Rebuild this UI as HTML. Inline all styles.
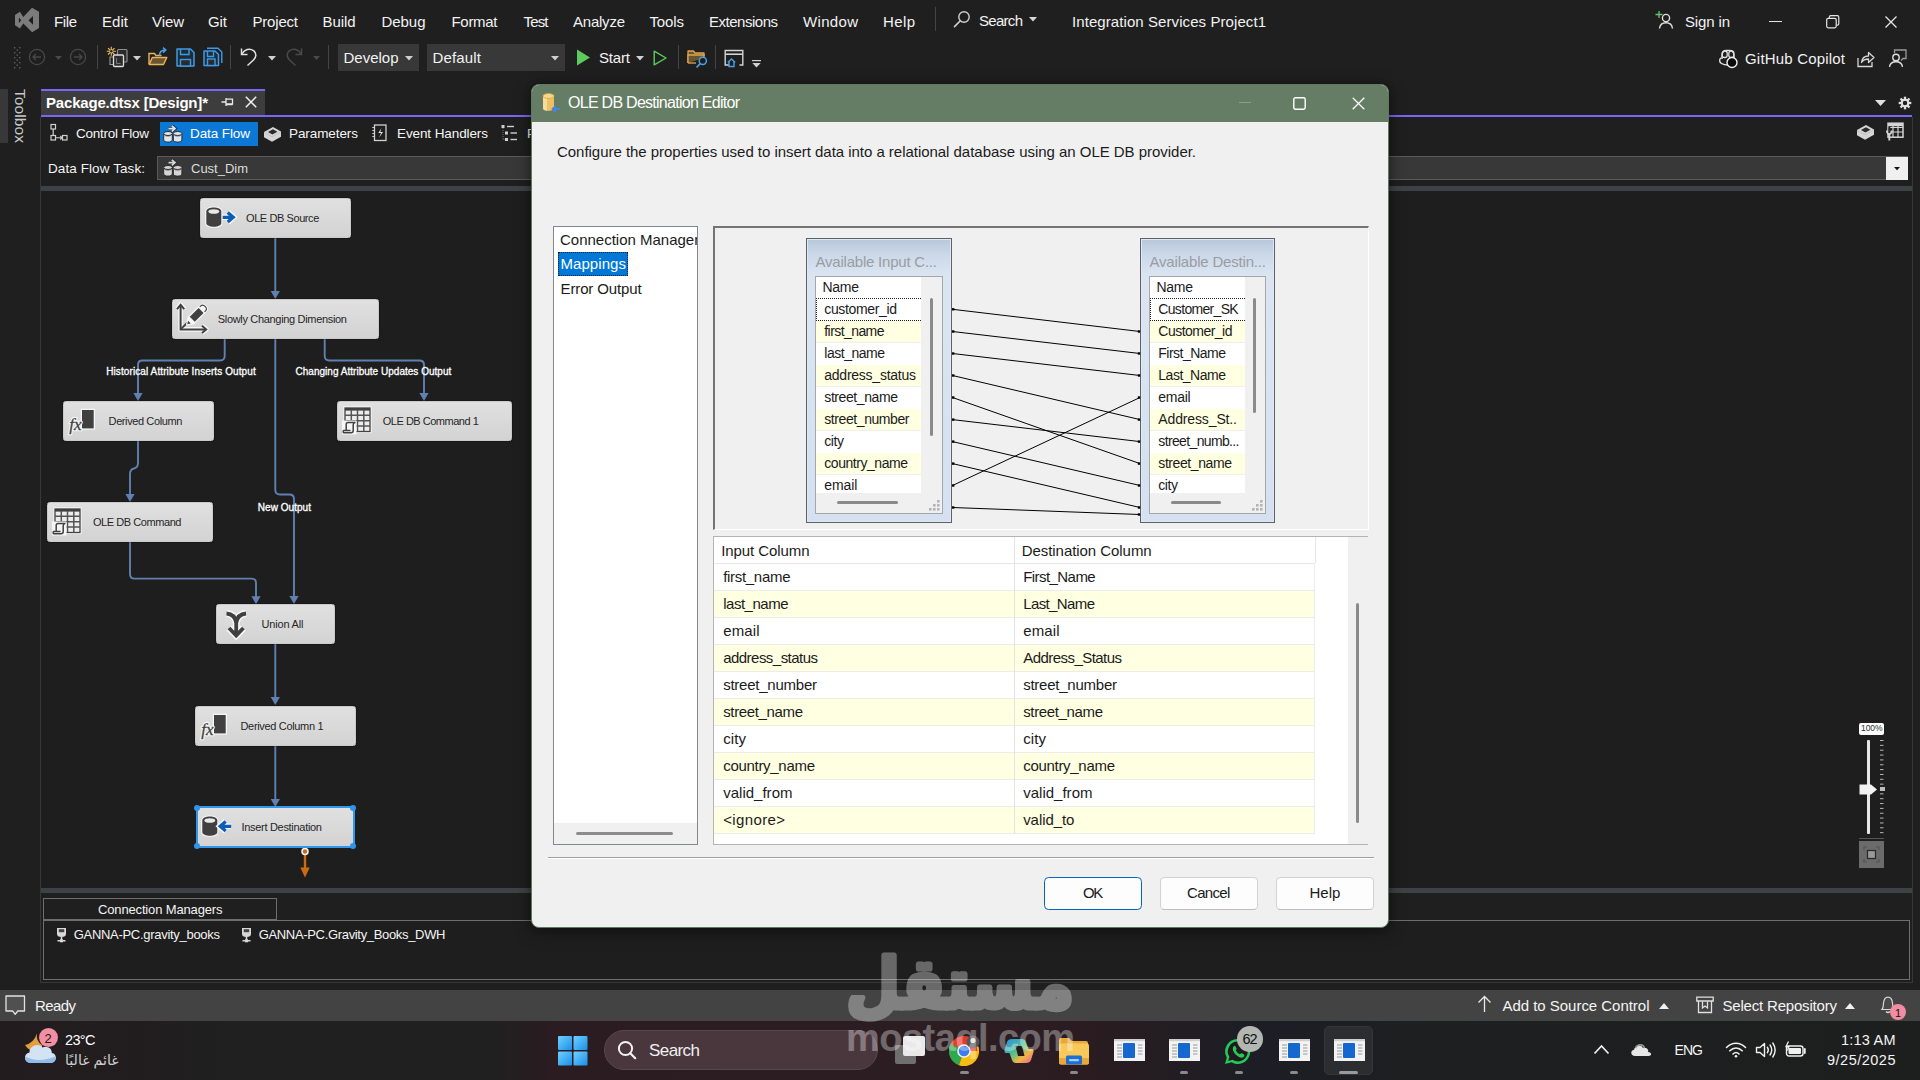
<!DOCTYPE html><html lang="en"><head><meta charset="utf-8"><title>OLE DB Destination Editor - Integration Services Project1</title><style>

html,body{margin:0;padding:0}
body{width:1920px;height:1080px;position:relative;overflow:hidden;background:#1f1f1f;font-family:"Liberation Sans","DejaVu Sans",sans-serif}
div,svg,span.t{position:absolute}
div{box-sizing:border-box}
.t{white-space:pre;line-height:0}
svg{overflow:visible}

</style></head><body>
<svg style="left:15px;top:8px;" width="24" height="24" viewBox="0 0 24 24"><path d="M17 -0.2L24 3.8V20L17.2 24.3L8.3 15.4L4.9 20.6L0 17.3V7L4.9 3.7L8.3 8.9Z M18 8V16.8L13.5 12.2Z M3.9 9.4V15L6.2 12.2Z" fill="#7c7c7c" fill-rule="evenodd"/></svg>
<span class="t" id="t0" style="left:54px;top:21.5px;font-size:15px;color:#f2f2f2;letter-spacing:-0.391px;">File</span>
<span class="t" id="t1" style="left:102px;top:21.5px;font-size:15px;color:#f2f2f2;letter-spacing:0.047px;">Edit</span>
<span class="t" id="t2" style="left:152px;top:21.5px;font-size:15px;color:#f2f2f2;letter-spacing:-0.083px;">View</span>
<span class="t" id="t3" style="left:208px;top:21.5px;font-size:15px;color:#f2f2f2;letter-spacing:-0.086px;">Git</span>
<span class="t" id="t4" style="left:252.5px;top:21.5px;font-size:15px;color:#f2f2f2;letter-spacing:-0.198px;">Project</span>
<span class="t" id="t5" style="left:322.5px;top:21.5px;font-size:15px;color:#f2f2f2;letter-spacing:-0.090px;">Build</span>
<span class="t" id="t6" style="left:381.5px;top:21.5px;font-size:15px;color:#f2f2f2;letter-spacing:-0.051px;">Debug</span>
<span class="t" id="t7" style="left:451.5px;top:21.5px;font-size:15px;color:#f2f2f2;letter-spacing:-0.303px;">Format</span>
<span class="t" id="t8" style="left:523.5px;top:21.5px;font-size:15px;color:#f2f2f2;letter-spacing:-0.839px;">Test</span>
<span class="t" id="t9" style="left:573px;top:21.5px;font-size:15px;color:#f2f2f2;letter-spacing:-0.229px;">Analyze</span>
<span class="t" id="t10" style="left:649.5px;top:21.5px;font-size:15px;color:#f2f2f2;letter-spacing:-0.133px;">Tools</span>
<span class="t" id="t11" style="left:709px;top:21.5px;font-size:15px;color:#f2f2f2;letter-spacing:-0.486px;">Extensions</span>
<span class="t" id="t12" style="left:803px;top:21.5px;font-size:15px;color:#f2f2f2;letter-spacing:0.328px;">Window</span>
<span class="t" id="t13" style="left:883px;top:21.5px;font-size:15px;color:#f2f2f2;letter-spacing:0.380px;">Help</span>
<div style="left:935px;top:7px;width:1px;height:24px;background:#444"></div>
<svg style="left:953px;top:10px;" width="18" height="18" viewBox="0 0 18 18"><circle cx="11" cy="7" r="5.2" fill="none" stroke="#d0d0d0" stroke-width="1.4"/><path d="M7.3 10.8 L1.5 16.6" stroke="#d0d0d0" stroke-width="1.6" stroke-linecap="round"/></svg>
<span class="t" id="t14" style="left:979px;top:20.5px;font-size:15px;color:#f2f2f2;letter-spacing:-0.706px;">Search</span>
<svg style="left:1029px;top:17px;" width="8" height="5" viewBox="0 0 8 5"><path d="M0 0H8L4 4.5Z" fill="#d8d8d8"/></svg>
<span class="t" id="t15" style="left:1072px;top:21.5px;font-size:15px;color:#f2f2f2;letter-spacing:0.080px;">Integration Services Project1</span>
<svg style="left:1654px;top:10px;" width="20" height="20" viewBox="0 0 20 20"><circle cx="12" cy="8" r="3.6" fill="none" stroke="#e0e0e0" stroke-width="1.4"/><path d="M5.5 18.5C6 14.5 8.5 12.8 12 12.8S18 14.5 18.5 18.5" fill="none" stroke="#e0e0e0" stroke-width="1.4"/><path d="M5 1V8M1.5 4.5H8.5" stroke="#6cc36c" stroke-width="1.3"/></svg>
<span class="t" id="t16" style="left:1685px;top:21.5px;font-size:15px;color:#f2f2f2;letter-spacing:-0.146px;">Sign in</span>
<div style="left:1769px;top:20.5px;width:13px;height:1.4px;background:#e6e6e6"></div>
<svg style="left:1826px;top:15px;" width="14" height="14" viewBox="0 0 14 14"><rect x="0.7" y="3.3" width="9.5" height="9.5" rx="1.5" fill="none" stroke="#e6e6e6" stroke-width="1.2"/><path d="M3.3 3V2.2Q3.3 0.7 4.8 0.7H11.3Q12.8 0.7 12.8 2.2V8.7Q12.8 10.2 11.3 10.2H10.5" fill="none" stroke="#e6e6e6" stroke-width="1.2"/></svg>
<svg style="left:1885px;top:16px;" width="12" height="12" viewBox="0 0 12 12"><path d="M0.5 0.5L11.5 11.5M11.5 0.5L0.5 11.5" stroke="#e6e6e6" stroke-width="1.3"/></svg>
<svg style="left:14px;top:47px;" width="7" height="22" viewBox="0 0 7 22"><rect x="0" y="0.0" width="1.4" height="1.4" fill="#5c5c5c"/><rect x="5" y="0.0" width="1.4" height="1.4" fill="#5c5c5c"/><rect x="2.5" y="2.5" width="1.4" height="1.4" fill="#5c5c5c"/><rect x="0" y="5.0" width="1.4" height="1.4" fill="#5c5c5c"/><rect x="5" y="5.0" width="1.4" height="1.4" fill="#5c5c5c"/><rect x="2.5" y="7.5" width="1.4" height="1.4" fill="#5c5c5c"/><rect x="0" y="10.0" width="1.4" height="1.4" fill="#5c5c5c"/><rect x="5" y="10.0" width="1.4" height="1.4" fill="#5c5c5c"/><rect x="2.5" y="12.5" width="1.4" height="1.4" fill="#5c5c5c"/><rect x="0" y="15.0" width="1.4" height="1.4" fill="#5c5c5c"/><rect x="5" y="15.0" width="1.4" height="1.4" fill="#5c5c5c"/><rect x="2.5" y="17.5" width="1.4" height="1.4" fill="#5c5c5c"/><rect x="0" y="20.0" width="1.4" height="1.4" fill="#5c5c5c"/><rect x="5" y="20.0" width="1.4" height="1.4" fill="#5c5c5c"/></svg>
<svg style="left:28.4px;top:47.6px;" width="18" height="18" viewBox="0 0 18 18"><circle cx="9" cy="9" r="7.6" fill="none" stroke="#474747" stroke-width="1.3"/><path d="M13 9H5M8 6L5 9L8 12" fill="none" stroke="#474747" stroke-width="1.3"/></svg>
<svg style="left:55px;top:56px;" width="7" height="4" viewBox="0 0 7 4"><path d="M0 0H7L3.5 4Z" fill="#4a4a4a"/></svg>
<svg style="left:69.2px;top:48.2px;" width="18" height="18" viewBox="0 0 18 18"><circle cx="9" cy="9" r="7.6" fill="none" stroke="#474747" stroke-width="1.3"/><path d="M5 9H13M10 6L13 9L10 12" fill="none" stroke="#474747" stroke-width="1.3"/></svg>
<div style="left:97px;top:45px;width:1px;height:24px;background:#444"></div>
<svg style="left:106px;top:46px;" width="23" height="22" viewBox="0 0 23 22"><rect x="11.5" y="3.5" width="9.5" height="12.5" rx="1" fill="#2b2b2b" stroke="#8d8d8d" stroke-width="1.2"/><path d="M7 11H4V18.5H7" fill="none" stroke="#9a9a9a" stroke-width="1.1"/><rect x="7.5" y="9" width="10" height="11.5" rx="1" fill="#2d2d2d" stroke="#dcdcdc" stroke-width="1.3"/><path d="M10.5 12V17.5H14.5" fill="none" stroke="#777" stroke-width="1"/><path d="M5.3 0.8V9.8M0.8 5.3H9.8M2.1 2.1L8.5 8.5M8.5 2.1L2.1 8.5" stroke="#f0c060" stroke-width="1.1"/><circle cx="5.3" cy="5.3" r="1.2" fill="#1f1f1f"/></svg>
<svg style="left:133px;top:56px;" width="8" height="5" viewBox="0 0 8 5"><path d="M0 0H8L4 4.5Z" fill="#d0d0d0"/></svg>
<svg style="left:148px;top:47px;" width="20" height="20" viewBox="0 0 20 20"><path d="M1 17V6.5H6.5L8 8.5H13.5" fill="none" stroke="#e9b45c" stroke-width="1.4"/><path d="M1.2 17.5L4.3 10.5H18.8L15.5 17.5Z" fill="#6b5530" stroke="#e9b45c" stroke-width="1.4" stroke-linejoin="round"/><path d="M11.5 8.5C11.5 4.5 14 3 17.5 3M15 0.6L17.8 3L15 5.6" fill="none" stroke="#4aa0e8" stroke-width="1.5"/></svg>
<svg style="left:176px;top:48px;" width="19" height="19" viewBox="0 0 19 19"><path d="M1 1H14.5L18 4.5V18H1Z" fill="#1e2c38" stroke="#3f9ae6" stroke-width="1.5" stroke-linejoin="round"/><path d="M4.5 1V6.5H13V1" fill="none" stroke="#3f9ae6" stroke-width="1.4"/><rect x="4.5" y="11.5" width="10" height="6.5" fill="#2b2b2b" stroke="#3f9ae6" stroke-width="1.4"/></svg>
<svg style="left:203px;top:47px;" width="20" height="20" viewBox="0 0 20 20"><path d="M4 1.2H15L18.8 5V16" fill="none" stroke="#3f9ae6" stroke-width="1.4" stroke-linejoin="round"/><path d="M1 4H12.0L15.5 7.5V18.5H1Z" fill="#1e2c38" stroke="#3f9ae6" stroke-width="1.5" stroke-linejoin="round"/><path d="M4.5 4V9.5H10.5V4" fill="none" stroke="#3f9ae6" stroke-width="1.4"/><rect x="4.5" y="12.0" width="7.5" height="6.5" fill="#2b2b2b" stroke="#3f9ae6" stroke-width="1.4"/></svg>
<div style="left:230px;top:45px;width:1px;height:24px;background:#444"></div>
<svg style="left:240px;top:47px;" width="18" height="20" viewBox="0 0 18 20"><path d="M1.5 1.5V7.5H7.5" fill="none" stroke="#e0e0e0" stroke-width="1.5"/><path d="M1.8 7.2C4.5 2.5 9.5 0.8 13.5 3.6C17 6.2 16.2 10.5 13.5 13L7.5 18.5" fill="none" stroke="#e0e0e0" stroke-width="1.5"/></svg>
<svg style="left:268px;top:56px;" width="8" height="5" viewBox="0 0 8 5"><path d="M0 0H8L4 4.5Z" fill="#d0d0d0"/></svg>
<svg style="left:285px;top:47px;" width="18" height="20" viewBox="0 0 18 20"><path d="M16.5 1.5V7.5H10.5" fill="none" stroke="#4a4a4a" stroke-width="1.5"/><path d="M16.2 7.2C13.5 2.5 8.5 0.8 4.5 3.6C1 6.2 1.8 10.5 4.5 13L10.5 18.5" fill="none" stroke="#4a4a4a" stroke-width="1.5"/></svg>
<svg style="left:313px;top:56px;" width="7" height="4" viewBox="0 0 7 4"><path d="M0 0H7L3.5 4Z" fill="#4a4a4a"/></svg>
<div style="left:328px;top:45px;width:1px;height:24px;background:#444"></div>
<div style="left:338px;top:44px;width:81px;height:27px;background:#383838"></div>
<span class="t" id="t17" style="left:343.5px;top:57.5px;font-size:15px;color:#f2f2f2;letter-spacing:-0.008px;">Develop</span>
<svg style="left:405px;top:56px;" width="8" height="5" viewBox="0 0 8 5"><path d="M0 0H8L4 4.5Z" fill="#d0d0d0"/></svg>
<div style="left:427px;top:44px;width:138px;height:27px;background:#383838"></div>
<span class="t" id="t18" style="left:432.5px;top:57.5px;font-size:15px;color:#f2f2f2;letter-spacing:0.161px;">Default</span>
<svg style="left:551px;top:56px;" width="8" height="5" viewBox="0 0 8 5"><path d="M0 0H8L4 4.5Z" fill="#d0d0d0"/></svg>
<svg style="left:576px;top:49px;" width="15" height="17" viewBox="0 0 15 17"><path d="M1 0.5L14 8.5L1 16.5Z" fill="#5ccb5f"/></svg>
<span class="t" id="t19" style="left:599px;top:57.5px;font-size:15px;color:#f2f2f2;letter-spacing:-0.172px;">Start</span>
<svg style="left:636px;top:56px;" width="8" height="5" viewBox="0 0 8 5"><path d="M0 0H8L4 4.5Z" fill="#d0d0d0"/></svg>
<svg style="left:653px;top:50px;" width="15" height="16" viewBox="0 0 15 16"><path d="M1.2 1.2L13 8L1.2 14.8Z" fill="none" stroke="#5ccb5f" stroke-width="1.4" stroke-linejoin="round"/></svg>
<div style="left:678px;top:45px;width:1px;height:24px;background:#444"></div>
<svg style="left:687px;top:49px;" width="22" height="20" viewBox="0 0 22 20"><path d="M1 14V2H6.5L8 4H17V7" fill="#6b5530" stroke="#dba84f" stroke-width="1.3" stroke-linejoin="round"/><path d="M1 14V6H17V9" fill="#6b5530" stroke="#dba84f" stroke-width="1.3"/><path d="M1 14H9" stroke="#dba84f" stroke-width="1.3"/><circle cx="15.8" cy="11.8" r="3.6" fill="#1f1f1f" stroke="#4aa0e8" stroke-width="1.5"/><path d="M13.2 14.6L9.5 18.5" stroke="#4aa0e8" stroke-width="1.7"/></svg>
<div style="left:715px;top:45px;width:1px;height:24px;background:#444"></div>
<svg style="left:724px;top:49px;" width="20" height="20" viewBox="0 0 20 20"><path d="M5 16H1.2V1.5H18.8V16H15.5" fill="none" stroke="#d4d4d4" stroke-width="1.4"/><path d="M1.2 5.2H18.8" stroke="#d4d4d4" stroke-width="1.6"/><path d="M3.8 13.5L7.5 10L11.2 13.5M5 12.8V17.5H10V12.8" fill="none" stroke="#4aa0e8" stroke-width="1.4"/></svg>
<svg style="left:752px;top:60px;" width="9" height="8" viewBox="0 0 9 8"><path d="M0 0.6H9" stroke="#d0d0d0" stroke-width="1.2"/><path d="M0.3 3H8.7L4.5 7.5Z" fill="#d0d0d0"/></svg>
<svg style="left:1718px;top:49px;" width="20" height="20" viewBox="0 0 20 20"><path d="M4 10V7C4 3 6 1.5 8 1.5H12C14 1.5 16 3 16 7V10" fill="none" stroke="#e0e0e0" stroke-width="1.4"/><rect x="4.2" y="2" width="5" height="6.5" rx="2.2" fill="none" stroke="#e0e0e0" stroke-width="1.3"/><rect x="10.8" y="2" width="5" height="6.5" rx="2.2" fill="none" stroke="#e0e0e0" stroke-width="1.3"/><path d="M3.5 8.5C1 10 1 13 3.5 14.5C6 16 8 16 10 16" fill="none" stroke="#e0e0e0" stroke-width="1.4"/><circle cx="14" cy="13.5" r="5" fill="#0a0a0a" stroke="#f0f0f0" stroke-width="1.4"/></svg>
<span class="t" id="t20" style="left:1745px;top:58.5px;font-size:15px;color:#f2f2f2;letter-spacing:0.189px;">GitHub Copilot</span>
<svg style="left:1857px;top:50px;" width="18" height="18" viewBox="0 0 18 18"><path d="M1 8V16.5H15V12" fill="none" stroke="#d8d8d8" stroke-width="1.3"/><path d="M4.5 12.5C5 8 8 6 11.5 6V2.5L17 7.5L11.5 12.5V9C8.5 9 6 10 4.5 12.5Z" fill="none" stroke="#d8d8d8" stroke-width="1.3" stroke-linejoin="round"/></svg>
<svg style="left:1888px;top:49px;" width="19" height="19" viewBox="0 0 19 19"><path d="M6.5 4V1H18V9.5H15L13 11.5" fill="none" stroke="#9a9a9a" stroke-width="1.3"/><circle cx="8" cy="8.5" r="3.2" fill="none" stroke="#e0e0e0" stroke-width="1.4"/><path d="M1.5 18C2 14 4.5 12.8 8 12.8S14 14 14.5 18" fill="none" stroke="#e0e0e0" stroke-width="1.4"/></svg>
<div style="left:0px;top:89px;width:8px;height:54px;background:#383838"></div>
<span class="t" style="left:20px;top:89px;font-size:15.5px;color:#c8c8c8;transform:rotate(90deg);transform-origin:0 0;letter-spacing:0.1px">Toolbox</span>
<div style="left:41px;top:89px;width:224px;height:26px;background:#3d3d3d;border-top:2px solid #7866f5"></div>
<span class="t" id="t21" style="left:46px;top:102.5px;font-size:15px;color:#ffffff;letter-spacing:-0.186px;font-weight:bold;">Package.dtsx [Design]*</span>
<svg style="left:221px;top:96px;" width="13" height="12" viewBox="0 0 13 12"><path d="M0.5 6H5M5 2V10M5 3.2H11.5V8H5M5 8.6H11.5" fill="none" stroke="#e8e8e8" stroke-width="1.3"/></svg>
<svg style="left:245px;top:96px;" width="12" height="12" viewBox="0 0 12 12"><path d="M0.8 0.8L11.2 11.2M11.2 0.8L0.8 11.2" stroke="#f0f0f0" stroke-width="1.5"/></svg>
<div style="left:41px;top:115px;width:1871px;height:2px;background:#7866f5"></div>
<svg style="left:1875px;top:100px;" width="11" height="6" viewBox="0 0 11 6"><path d="M0 0H11L5.5 6Z" fill="#e0e0e0"/></svg>
<svg style="left:1898px;top:95.5px;transform:scale(.9)" width="14" height="14" viewBox="0 0 14 14"><g transform="translate(7,7)"><rect x="-1.3" y="-7" width="2.6" height="4" fill="#e0e0e0" transform="rotate(0)"/><rect x="-1.3" y="-7" width="2.6" height="4" fill="#e0e0e0" transform="rotate(45)"/><rect x="-1.3" y="-7" width="2.6" height="4" fill="#e0e0e0" transform="rotate(90)"/><rect x="-1.3" y="-7" width="2.6" height="4" fill="#e0e0e0" transform="rotate(135)"/><rect x="-1.3" y="-7" width="2.6" height="4" fill="#e0e0e0" transform="rotate(180)"/><rect x="-1.3" y="-7" width="2.6" height="4" fill="#e0e0e0" transform="rotate(225)"/><rect x="-1.3" y="-7" width="2.6" height="4" fill="#e0e0e0" transform="rotate(270)"/><rect x="-1.3" y="-7" width="2.6" height="4" fill="#e0e0e0" transform="rotate(315)"/><circle r="3.6" fill="none" stroke="#e0e0e0" stroke-width="2.2"/></g></svg>
<svg style="left:50px;top:123px;" width="18" height="20" viewBox="0 0 18 20"><rect x="1" y="1.5" width="4.5" height="4.5" fill="none" stroke="#d0d0d0" stroke-width="1.2"/><path d="M3.2 6V12" stroke="#d0d0d0" stroke-width="1.2"/><rect x="1" y="12.5" width="4.5" height="4.5" fill="none" stroke="#d0d0d0" stroke-width="1.2"/><path d="M5.5 14.8H12M10.3 13L12 14.8L10.3 16.5" stroke="#d0d0d0" stroke-width="1.1" fill="none"/><rect x="12.5" y="12.5" width="4.5" height="4.5" fill="none" stroke="#d0d0d0" stroke-width="1.2"/></svg>
<span class="t" id="t22" style="left:76px;top:133.5px;font-size:13.5px;color:#f4f4f4;letter-spacing:-0.253px;">Control Flow</span>
<div style="left:160px;top:122px;width:98px;height:24px;background:#0b78d6"></div>
<svg style="left:163px;top:124.5px;" width="20" height="18" viewBox="0 0 20 18"><path d="M0.7 8.5V15C0.7 17.8 9.299999999999999 17.8 9.299999999999999 15V8.5" fill="#e4e4e4" stroke="#20303f" stroke-width="1"/><ellipse cx="5.0" cy="8.5" rx="4.3" ry="2" fill="#e4e4e4" stroke="#20303f" stroke-width="1"/><path d="M1.7 10.6Q5.0 12.2 8.299999999999999 10.6" fill="none" stroke="#20303f" stroke-width="0.7" opacity=".6"/><path d="M10.3 8.5V15C10.3 17.8 18.9 17.8 18.9 15V8.5" fill="#e4e4e4" stroke="#20303f" stroke-width="1"/><ellipse cx="14.600000000000001" cy="8.5" rx="4.3" ry="2" fill="#e4e4e4" stroke="#20303f" stroke-width="1"/><path d="M11.3 10.6Q14.600000000000001 12.2 17.9 10.6" fill="none" stroke="#20303f" stroke-width="0.7" opacity=".6"/><path d="M5.5 3.6H11M8.8 0.6L12.3 3.6L8.8 6.6" fill="none" stroke="#20303f" stroke-width="3.2"/><path d="M5.5 3.6H11M8.8 0.8L12 3.6L8.8 6.4" fill="none" stroke="#e4e4e4" stroke-width="1.7"/></svg>
<span class="t" id="t23" style="left:190px;top:133.5px;font-size:13.5px;color:#ffffff;letter-spacing:-0.098px;">Data Flow</span>
<svg style="left:263px;top:126px;" width="19" height="17" viewBox="0 0 19 17"><path d="M1 6L10 1L18 5.5V10.8L9 15.8L1 11.3Z" fill="#d6d6d6"/><path d="M5 6L10 3.2L14.4 5.7L9.4 8.6Z" fill="#2a2a2a"/><path d="M1 6.4L9 10.8L18 5.9" fill="none" stroke="#bdbdbd" stroke-width="0.8"/></svg>
<span class="t" id="t24" style="left:289px;top:133.5px;font-size:13.5px;color:#f4f4f4;letter-spacing:-0.087px;">Parameters</span>
<svg style="left:372px;top:124px;" width="15" height="18" viewBox="0 0 15 18"><rect x="2.5" y="1" width="11.5" height="15.5" fill="none" stroke="#d0d0d0" stroke-width="1.3"/><path d="M0.3 3.5H3M0.3 6.5H3M0.3 9.5H3M0.3 12.5H3" stroke="#d0d0d0" stroke-width="1"/><path d="M9.5 4L6.3 9H9L7.2 13.5L11 8H8.3Z" fill="#e0e0e0"/></svg>
<span class="t" id="t25" style="left:397px;top:133.5px;font-size:13.5px;color:#f4f4f4;letter-spacing:-0.101px;">Event Handlers</span>
<svg style="left:501px;top:124px;" width="16" height="18" viewBox="0 0 16 18"><rect x="0.5" y="1" width="3" height="3" fill="#d0d0d0"/><path d="M6 2.5H13" stroke="#d0d0d0" stroke-width="1.4"/><rect x="4" y="7.5" width="3" height="3" fill="#d0d0d0"/><path d="M9.5 9H16" stroke="#d0d0d0" stroke-width="1.4"/><rect x="4" y="14" width="3" height="3" fill="#d0d0d0"/><path d="M9.5 15.5H16" stroke="#d0d0d0" stroke-width="1.4"/><path d="M2 4V15.5H4" fill="none" stroke="#8a8a8a" stroke-width="0.8" stroke-dasharray="1 1"/></svg>
<span class="t" id="t26" style="left:527px;top:133.5px;font-size:13.5px;color:#f4f4f4;letter-spacing:0.163px;">Package Explorer</span>
<svg style="left:1856px;top:124px;" width="19" height="17" viewBox="0 0 19 17"><path d="M1 6L10 1L18 5.5V10.8L9 15.8L1 11.3Z" fill="#d6d6d6"/><path d="M5 6L10 3.2L14.4 5.7L9.4 8.6Z" fill="#2a2a2a"/><path d="M1 6.4L9 10.8L18 5.9" fill="none" stroke="#bdbdbd" stroke-width="0.8"/></svg>
<svg style="left:1885px;top:122px;" width="20" height="20" viewBox="0 0 20 20"><rect x="3" y="1.2" width="15" height="14" fill="none" stroke="#d4d4d4" stroke-width="1.5"/><path d="M3 5.5H18M3 10H18M8 1.2V15M13 1.2V15" stroke="#d4d4d4" stroke-width="1.2"/><rect x="3" y="1.2" width="15" height="3" fill="#d4d4d4"/><path d="M2 8.5Q2 11.5 4.3 12.3V18.5M6.6 8.5Q6.6 11.5 4.3 12.3" fill="none" stroke="#d4d4d4" stroke-width="1.9"/><rect x="3.3" y="4.5" width="2" height="6.5" fill="#2a2a2a"/></svg>
<span class="t" id="t27" style="left:48px;top:168.5px;font-size:13.5px;color:#f4f4f4;letter-spacing:0.086px;">Data Flow Task:</span>
<div style="left:157px;top:156px;width:1751px;height:24px;background:#383838;border:1px solid #5a5a5a"></div>
<svg style="left:162.5px;top:159px;" width="20" height="18" viewBox="0 0 20 18"><path d="M0.7 8.5V15C0.7 17.8 9.299999999999999 17.8 9.299999999999999 15V8.5" fill="#d4d4d4" stroke="#2a2a2a" stroke-width="1"/><ellipse cx="5.0" cy="8.5" rx="4.3" ry="2" fill="#d4d4d4" stroke="#2a2a2a" stroke-width="1"/><path d="M1.7 10.6Q5.0 12.2 8.299999999999999 10.6" fill="none" stroke="#2a2a2a" stroke-width="0.7" opacity=".6"/><path d="M10.3 8.5V15C10.3 17.8 18.9 17.8 18.9 15V8.5" fill="#d4d4d4" stroke="#2a2a2a" stroke-width="1"/><ellipse cx="14.600000000000001" cy="8.5" rx="4.3" ry="2" fill="#d4d4d4" stroke="#2a2a2a" stroke-width="1"/><path d="M11.3 10.6Q14.600000000000001 12.2 17.9 10.6" fill="none" stroke="#2a2a2a" stroke-width="0.7" opacity=".6"/><path d="M5.5 3.6H11M8.8 0.6L12.3 3.6L8.8 6.6" fill="none" stroke="#2a2a2a" stroke-width="3.2"/><path d="M5.5 3.6H11M8.8 0.8L12 3.6L8.8 6.4" fill="none" stroke="#d4d4d4" stroke-width="1.7"/></svg>
<span class="t" id="t28" style="left:191px;top:168.5px;font-size:13px;color:#dddddd;letter-spacing:-0.011px;">Cust_Dim</span>
<div style="left:1886px;top:157px;width:21.5px;height:22.5px;background:#f0f0f0"></div>
<svg style="left:1894.4px;top:167px;" width="6" height="3.2" viewBox="0 0 6 3.2"><path d="M0 0H6L3 3.2Z" fill="#111"/></svg>
<div style="left:41px;top:186px;width:1871px;height:5px;background:#3e4246"></div>
<div style="left:40px;top:117px;width:1px;height:866px;background:#373737"></div>
<div style="left:1912px;top:117px;width:1px;height:866px;background:#373737"></div>
<div style="left:41px;top:191px;width:1871px;height:697px;background:#1e1e1e"></div>
<div style="left:41px;top:888px;width:1871px;height:5px;background:#3e4246"></div>
<svg style="left:0px;top:0px;" width="1920" height="1080" viewBox="0 0 1920 1080"><path d="M275.3 237V292" fill="none" stroke="#5f80b0" stroke-width="1.9"/><path d="M270.7 291H279.90000000000003L275.3 299Z" fill="#5f80b0"/><path d="M224.7 339V356Q224.7 360.5 220 360.5H142.5Q138 360.5 138 365V394" fill="none" stroke="#5f80b0" stroke-width="1.9"/><path d="M133.4 393H142.6L138 401Z" fill="#5f80b0"/><path d="M324.7 339V356Q324.7 360.5 329.4 360.5H419.3Q424 360.5 424 365V394" fill="none" stroke="#5f80b0" stroke-width="1.9"/><path d="M419.4 393H428.6L424 401Z" fill="#5f80b0"/><path d="M275.3 339V490Q275.3 494.5 280 494.5H289.3Q294 494.5 294 499V597" fill="none" stroke="#5f80b0" stroke-width="1.9"/><path d="M289.4 596H298.6L294 604Z" fill="#5f80b0"/><path d="M138 441V463Q138 467.5 134 468.5Q130 469.5 130 474V495" fill="none" stroke="#5f80b0" stroke-width="1.9"/><path d="M125.4 494H134.6L130 502Z" fill="#5f80b0"/><path d="M130 542V574Q130 578.6 134.5 578.6H251.5Q256 578.6 256 583V597" fill="none" stroke="#5f80b0" stroke-width="1.9"/><path d="M251.4 596.3H260.6L256 604.3Z" fill="#5f80b0"/><path d="M275.3 644V698" fill="none" stroke="#5f80b0" stroke-width="1.9"/><path d="M270.7 697H279.90000000000003L275.3 705Z" fill="#5f80b0"/><path d="M275.3 746V800" fill="none" stroke="#5f80b0" stroke-width="1.9"/><path d="M270.7 799H279.90000000000003L275.3 807Z" fill="#5f80b0"/><path d="M305 854V869" stroke="#cc6c12" stroke-width="2.4"/><path d="M300.3 867.5H309.7L305 877.5Z" fill="#cc6c12"/><circle cx="305" cy="851.6" r="3" fill="#cc6c12" stroke="#fafafa" stroke-width="1.5"/></svg>
<div style="left:200px;top:198px;width:151px;height:40px;background:linear-gradient(#e0e0e0,#d3d3d3);border:1px solid #c9c9c9;border-radius:2.5px;box-shadow:0 0 2px rgba(0,0,0,.6)"></div>
<svg style="left:200px;top:198px;" width="151" height="40" viewBox="0 0 151 40"><path d="M6.3 13.5V25.0C6.3 30.0 21.3 30.0 21.3 25.0V13.5C21.3 8.2 6.3 8.2 6.3 13.5Z" fill="#404040" stroke="#f6f6f6" stroke-width="2.2"/><path d="M6.3 13.5V25.0C6.3 30.0 21.3 30.0 21.3 25.0V13.5C21.3 8.2 6.3 8.2 6.3 13.5Z" fill="#404040"/><ellipse cx="13.8" cy="13.5" rx="5.4" ry="2.3" fill="#e9e9e9"/><path d="M22.2 19.3H30.2M27.7 14.100000000000001L33.7 19.3L27.7 24.5" fill="none" stroke="#f6f6f6" stroke-width="5.6"/><path d="M22.7 19.3H31.2M27.7 14.5L33.2 19.3L27.7 24.1" fill="none" stroke="#0d5cb6" stroke-width="3.3"/></svg>
<span class="t" id="t29" style="left:246px;top:218.3px;font-size:11px;color:#262626;letter-spacing:-0.414px;">OLE DB Source</span>
<div style="left:172px;top:299px;width:207px;height:40px;background:linear-gradient(#e0e0e0,#d3d3d3);border:1px solid #c9c9c9;border-radius:2.5px;box-shadow:0 0 2px rgba(0,0,0,.6)"></div>
<svg style="left:172px;top:299px;" width="207" height="40" viewBox="0 0 207 40"><path d="M8.6 6.5V30.4H33.5M5 10L8.6 5.7L12.2 10M30 26.8L34.4 30.4L30 34" fill="none" stroke="#f6f6f6" stroke-width="4.6" stroke-linejoin="round"/><path d="M8.6 6.5V30.4H33.5" fill="none" stroke="#404040" stroke-width="2"/><path d="M5 10.2L8.6 5.9L12.2 10.2M30 26.8L34.2 30.4L30 34" fill="none" stroke="#404040" stroke-width="2"/><path d="M8.6 30.4L16 23" stroke="#404040" stroke-width="1.8"/><g transform="translate(15.3,25.2) rotate(-45)"><path d="M0 0L5.5 -3.6H22Q25.6 -3.6 25.6 0Q25.6 3.6 22 3.6H5.5Z" fill="#f6f6f6" stroke="#f6f6f6" stroke-width="2.6" stroke-linejoin="round"/><path d="M7 -3.5H19.5V3.5H7Z" fill="#404040"/><path d="M0 0L3 -1.9V1.9Z" fill="#404040"/><path d="M21 -3.4H22.4Q25.2 -3.4 25.2 0Q25.2 3.4 22.4 3.4H21" fill="none" stroke="#404040" stroke-width="1.1"/></g></svg>
<span class="t" id="t30" style="left:217.8px;top:319.3px;font-size:11px;color:#262626;letter-spacing:-0.324px;">Slowly Changing Dimension</span>
<div style="left:63px;top:401px;width:151px;height:40px;background:linear-gradient(#e0e0e0,#d3d3d3);border:1px solid #c9c9c9;border-radius:2.5px;box-shadow:0 0 2px rgba(0,0,0,.6)"></div>
<svg style="left:63px;top:401px;" width="151" height="40" viewBox="0 0 151 40"><rect x="19" y="9" width="11.7" height="18.4" fill="#404040" stroke="#f6f6f6" stroke-width="2.6"/><rect x="19" y="9" width="11.7" height="18.4" fill="#404040"/><text x="6.3" y="28.6" font-family="Liberation Serif,serif" font-style="italic" font-size="17" fill="#f6f6f6" stroke="#f6f6f6" stroke-width="2.6">fx</text><text x="6.3" y="28.6" font-family="Liberation Serif,serif" font-style="italic" font-size="17" fill="#404040" stroke="#404040" stroke-width="0.3">fx</text></svg>
<span class="t" id="t31" style="left:108.6px;top:421.3px;font-size:11px;color:#262626;letter-spacing:-0.398px;">Derived Column</span>
<div style="left:337px;top:401px;width:175px;height:40px;background:linear-gradient(#e0e0e0,#d3d3d3);border:1px solid #c9c9c9;border-radius:2.5px;box-shadow:0 0 2px rgba(0,0,0,.6)"></div>
<svg style="left:337px;top:401px;" width="175" height="40" viewBox="0 0 175 40"><rect x="8" y="7" width="25" height="23.5" fill="#f6f6f6" stroke="#f6f6f6" stroke-width="3.2"/><rect x="8" y="7" width="25" height="23.5" fill="#ededed" stroke="#404040" stroke-width="1.3"/><rect x="8" y="7" width="25" height="2.6" fill="#404040"/><path d="M8 14.3H33M8 19.7H33M8 25.1H33M14.3 9V30.5M20.5 9V30.5M26.8 9V30.5" stroke="#555" stroke-width="1.5"/><path d="M5 19.5H19.5V33.5H5Z" fill="#f6f6f6"/><path d="M18.5 21.5H11Q9.2 21.5 9.2 23.3V29.5" fill="none" stroke="#404040" stroke-width="1.5"/><path d="M17.8 21.5Q16.2 21.8 16.2 23.8V29.8Q16.2 31.8 14 31.8H7.5Q6 31.8 6.2 30.3L6.5 29.5H13.5" fill="#f2f2f2" stroke="#404040" stroke-width="1.5" stroke-linejoin="round"/></svg>
<span class="t" id="t32" style="left:382.8px;top:421.3px;font-size:11px;color:#262626;letter-spacing:-0.489px;">OLE DB Command 1</span>
<div style="left:47px;top:502px;width:166px;height:40px;background:linear-gradient(#e0e0e0,#d3d3d3);border:1px solid #c9c9c9;border-radius:2.5px;box-shadow:0 0 2px rgba(0,0,0,.6)"></div>
<svg style="left:47px;top:502px;" width="166" height="40" viewBox="0 0 166 40"><rect x="8" y="7" width="25" height="23.5" fill="#f6f6f6" stroke="#f6f6f6" stroke-width="3.2"/><rect x="8" y="7" width="25" height="23.5" fill="#ededed" stroke="#404040" stroke-width="1.3"/><rect x="8" y="7" width="25" height="2.6" fill="#404040"/><path d="M8 14.3H33M8 19.7H33M8 25.1H33M14.3 9V30.5M20.5 9V30.5M26.8 9V30.5" stroke="#555" stroke-width="1.5"/><path d="M5 19.5H19.5V33.5H5Z" fill="#f6f6f6"/><path d="M18.5 21.5H11Q9.2 21.5 9.2 23.3V29.5" fill="none" stroke="#404040" stroke-width="1.5"/><path d="M17.8 21.5Q16.2 21.8 16.2 23.8V29.8Q16.2 31.8 14 31.8H7.5Q6 31.8 6.2 30.3L6.5 29.5H13.5" fill="#f2f2f2" stroke="#404040" stroke-width="1.5" stroke-linejoin="round"/></svg>
<span class="t" id="t33" style="left:93px;top:522.3px;font-size:11px;color:#262626;letter-spacing:-0.435px;">OLE DB Command</span>
<div style="left:216px;top:604px;width:119px;height:40px;background:linear-gradient(#e0e0e0,#d3d3d3);border:1px solid #c9c9c9;border-radius:2.5px;box-shadow:0 0 2px rgba(0,0,0,.6)"></div>
<svg style="left:216px;top:604px;" width="119" height="40" viewBox="0 0 119 40"><path d="M10.5 9.5Q19 10 20.2 19M30 9.5Q21.5 10 20.2 19M20.2 16V31M13 24L20.2 31.5L27.4 24" fill="none" stroke="#f6f6f6" stroke-width="7" stroke-linejoin="miter"/><path d="M10.5 9.5Q19 10 20.2 19M30 9.5Q21.5 10 20.2 19M20.2 16V30M13 24L20.2 31.5L27.4 24" fill="none" stroke="#404040" stroke-width="3.8" stroke-linejoin="miter"/></svg>
<span class="t" id="t34" style="left:261.5px;top:624.3px;font-size:11px;color:#262626;letter-spacing:-0.178px;">Union All</span>
<div style="left:195px;top:705.5px;width:161px;height:40px;background:linear-gradient(#e0e0e0,#d3d3d3);border:1px solid #c9c9c9;border-radius:2.5px;box-shadow:0 0 2px rgba(0,0,0,.6)"></div>
<svg style="left:195px;top:705.5px;" width="161" height="40" viewBox="0 0 161 40"><rect x="19" y="9" width="11.7" height="18.4" fill="#404040" stroke="#f6f6f6" stroke-width="2.6"/><rect x="19" y="9" width="11.7" height="18.4" fill="#404040"/><text x="6.3" y="28.6" font-family="Liberation Serif,serif" font-style="italic" font-size="17" fill="#f6f6f6" stroke="#f6f6f6" stroke-width="2.6">fx</text><text x="6.3" y="28.6" font-family="Liberation Serif,serif" font-style="italic" font-size="17" fill="#404040" stroke="#404040" stroke-width="0.3">fx</text></svg>
<span class="t" id="t35" style="left:240.5px;top:725.8px;font-size:11px;color:#262626;letter-spacing:-0.336px;">Derived Column 1</span>
<div style="left:195.5px;top:806.4px;width:159.2px;height:41.2px;background:linear-gradient(#e0e0e0,#d3d3d3);border:2px solid #2f97ec;border-radius:2px"></div>
<svg style="left:196px;top:807px;" width="159" height="40" viewBox="0 0 159 40"><path d="M6.3 13.5V25.0C6.3 30.0 21.3 30.0 21.3 25.0V13.5C21.3 8.2 6.3 8.2 6.3 13.5Z" fill="#404040" stroke="#f6f6f6" stroke-width="2.2"/><path d="M6.3 13.5V25.0C6.3 30.0 21.3 30.0 21.3 25.0V13.5C21.3 8.2 6.3 8.2 6.3 13.5Z" fill="#404040"/><ellipse cx="13.8" cy="13.5" rx="5.4" ry="2.3" fill="#e9e9e9"/><path d="M35.2 19.3H27.2M29.7 14.100000000000001L23.7 19.3L29.7 24.5" fill="none" stroke="#f6f6f6" stroke-width="5.6"/><path d="M35.2 19.3H26.2M29.7 14.5L24.2 19.3L29.7 24.1" fill="none" stroke="#0d5cb6" stroke-width="3.3"/></svg>
<span class="t" id="t36" style="left:241.5px;top:826.8px;font-size:11px;color:#262626;letter-spacing:-0.301px;">Insert Destination</span>
<div style="left:193.7px;top:804.7px;width:6.6px;height:6.6px;background:#2f95ea;border-radius:50%"></div>
<div style="left:349.7px;top:804.7px;width:6.6px;height:6.6px;background:#2f95ea;border-radius:50%"></div>
<div style="left:193.7px;top:842.9000000000001px;width:6.6px;height:6.6px;background:#2f95ea;border-radius:50%"></div>
<div style="left:349.7px;top:842.9000000000001px;width:6.6px;height:6.6px;background:#2f95ea;border-radius:50%"></div>
<span class="t" id="t37" style="left:106.2px;top:371.9px;font-size:10px;color:#ffffff;letter-spacing:0.098px;-webkit-text-stroke:.3px #fff;">Historical Attribute Inserts Output</span>
<span class="t" id="t38" style="left:295.5px;top:371.9px;font-size:10px;color:#ffffff;letter-spacing:0.022px;-webkit-text-stroke:.3px #fff;">Changing Attribute Updates Output</span>
<span class="t" id="t39" style="left:257.8px;top:507.8px;font-size:10px;color:#ffffff;letter-spacing:0.043px;-webkit-text-stroke:.3px #fff;">New Output</span>
<div style="left:1859px;top:723px;width:25px;height:12px;background:#fdfdfd;border-radius:2px"></div>
<span class="t" id="t40" style="left:1861px;top:728.0px;font-size:8.5px;color:#303030;letter-spacing:-0.083px;">100%</span>
<div style="left:1866.5px;top:740px;width:3px;height:94px;background:#e8e8e8;border-radius:1px"></div>
<svg style="left:1880px;top:740px;" width="5" height="94" viewBox="0 0 5 94"><rect x="0" y="0.00" width="3.5" height="1" fill="#b5b5b5"/><rect x="0" y="4.85" width="3.5" height="1" fill="#b5b5b5"/><rect x="0" y="9.70" width="3.5" height="1" fill="#b5b5b5"/><rect x="0" y="14.55" width="3.5" height="1" fill="#b5b5b5"/><rect x="0" y="19.40" width="3.5" height="1" fill="#b5b5b5"/><rect x="0" y="24.25" width="3.5" height="1" fill="#b5b5b5"/><rect x="0" y="29.10" width="3.5" height="1" fill="#b5b5b5"/><rect x="0" y="33.95" width="3.5" height="1" fill="#b5b5b5"/><rect x="0" y="38.80" width="3.5" height="1" fill="#b5b5b5"/><rect x="0" y="43.65" width="3.5" height="1" fill="#b5b5b5"/><rect x="0" y="48.50" width="3.5" height="1" fill="#b5b5b5"/><rect x="0" y="53.35" width="3.5" height="1" fill="#b5b5b5"/><rect x="0" y="58.20" width="3.5" height="1" fill="#b5b5b5"/><rect x="0" y="63.05" width="3.5" height="1" fill="#b5b5b5"/><rect x="0" y="67.90" width="3.5" height="1" fill="#b5b5b5"/><rect x="0" y="72.75" width="3.5" height="1" fill="#b5b5b5"/><rect x="0" y="77.60" width="3.5" height="1" fill="#b5b5b5"/><rect x="0" y="82.45" width="3.5" height="1" fill="#b5b5b5"/><rect x="0" y="87.30" width="3.5" height="1" fill="#b5b5b5"/><rect x="0" y="92.15" width="3.5" height="1" fill="#b5b5b5"/></svg>
<div style="left:1880px;top:786.5px;width:5px;height:4px;background:#bdbdbd"></div>
<svg style="left:1859px;top:783px;" width="19" height="13" viewBox="0 0 19 13"><path d="M0.5 1.5H12L18 6.5L12 11.5H0.5Z" fill="#f2f2f2"/></svg>
<div style="left:1859px;top:838px;width:25px;height:1px;background:#555"></div>
<div style="left:1859px;top:841px;width:25px;height:27px;background:#6b6b6b"></div>
<svg style="left:1863px;top:846px;" width="17" height="17" viewBox="0 0 17 17"><rect x="4.5" y="4.5" width="8" height="8" fill="#9a9a9a" stroke="#2c2c2c" stroke-width="1.3"/><path d="M1 4V1H4M13 1H16V4M16 13V16H13M4 16H1V13" fill="none" stroke="#555" stroke-width="1.2"/></svg>
<div style="left:40px;top:982px;width:1873px;height:1px;background:#373737"></div>
<div style="left:43px;top:898px;width:234px;height:22px;border:1px solid #6e6e6e;background:#1f1f1f"></div>
<span class="t" id="t41" style="left:98px;top:909.8px;font-size:13px;color:#f4f4f4;letter-spacing:-0.150px;">Connection Managers</span>
<div style="left:43px;top:920px;width:1867px;height:60px;border:1px solid #6e6e6e;background:#1e1e1e"></div>
<svg style="left:56px;top:927px;" width="11" height="16" viewBox="0 0 11 16"><path d="M1 1H10V7Q10 10 5.5 10Q1 10 1 7Z" fill="#d8d8d8"/><rect x="2.8" y="2.2" width="5.4" height="3" fill="#444"/><path d="M5.5 10V13.5M1.5 13.8H9.5" stroke="#d8d8d8" stroke-width="1.6"/><rect x="4" y="12.3" width="3" height="3" fill="#d8d8d8"/></svg>
<span class="t" id="t42" style="left:73.7px;top:934.7px;font-size:13px;color:#f4f4f4;letter-spacing:-0.293px;">GANNA-PC.gravity_books</span>
<svg style="left:240.5px;top:927px;" width="11" height="16" viewBox="0 0 11 16"><path d="M1 1H10V7Q10 10 5.5 10Q1 10 1 7Z" fill="#d8d8d8"/><rect x="2.8" y="2.2" width="5.4" height="3" fill="#444"/><path d="M5.5 10V13.5M1.5 13.8H9.5" stroke="#d8d8d8" stroke-width="1.6"/><rect x="4" y="12.3" width="3" height="3" fill="#d8d8d8"/></svg>
<span class="t" id="t43" style="left:258.7px;top:934.7px;font-size:13px;color:#f4f4f4;letter-spacing:-0.330px;">GANNA-PC.Gravity_Books_DWH</span>
<div style="left:0px;top:990px;width:1920px;height:31px;background:#434343"></div>
<svg style="left:5px;top:995px;" width="21" height="21" viewBox="0 0 21 21"><path d="M1 1H19.5V16H12.8L10.2 19.3L7.6 16H1Z" fill="#505050" stroke="#e2e2e2" stroke-width="1.3" stroke-linejoin="round"/></svg>
<span class="t" id="t44" style="left:35px;top:1005.5px;font-size:15px;color:#f4f4f4;letter-spacing:-0.590px;">Ready</span>
<svg style="left:1477px;top:995px;" width="15" height="18" viewBox="0 0 15 18"><path d="M7.5 17V1.5M1.5 7.5L7.5 1.5L13.5 7.5" fill="none" stroke="#e8e8e8" stroke-width="1.3"/></svg>
<span class="t" id="t45" style="left:1502.5px;top:1005.5px;font-size:15px;color:#f4f4f4;letter-spacing:-0.030px;">Add to Source Control</span>
<svg style="left:1658.5px;top:1002.5px;" width="10" height="6" viewBox="0 0 10 6"><path d="M0 6H10L5 0Z" fill="#f0f0f0"/></svg>
<svg style="left:1696px;top:996px;" width="18" height="18" viewBox="0 0 18 18"><path d="M0.8 1.2H17.2V5H0.8Z" fill="none" stroke="#e0e0e0" stroke-width="1.3"/><path d="M2.5 5V16.5H15.5V5" fill="none" stroke="#e0e0e0" stroke-width="1.3"/><path d="M6.5 5.5V12L9 10L11.5 12V5.5" fill="none" stroke="#e0e0e0" stroke-width="1.3"/></svg>
<span class="t" id="t46" style="left:1722.5px;top:1005.5px;font-size:15px;color:#f4f4f4;letter-spacing:-0.191px;">Select Repository</span>
<svg style="left:1844.5px;top:1002.5px;" width="10" height="6" viewBox="0 0 10 6"><path d="M0 6H10L5 0Z" fill="#f0f0f0"/></svg>
<svg style="left:1880px;top:996px;" width="16" height="18" viewBox="0 0 16 18"><path d="M2 13.5C3.5 12 3.2 9.5 3.5 7C4 3 6 1.2 8 1.2S12 3 12.5 7C12.8 9.5 12.5 12 14 13.5Z" fill="#4a4a4a" stroke="#d8d8d8" stroke-width="1.2"/><path d="M6 15.5Q8 17.5 10 15.5" fill="none" stroke="#d8d8d8" stroke-width="1.2"/></svg>
<div style="left:1889.5px;top:1003.5px;width:16px;height:16px;background:#f28ca0;border-radius:50%"></div>
<span class="t" id="t47" style="left:1895px;top:1012.5px;font-size:11px;color:#111;">1</span>
<div style="left:0px;top:1021px;width:1920px;height:59px;background:linear-gradient(90deg,#231c1f 0px,#211d1f 140px,#202020 230px,#202020 490px,#2a1c21 550px,#2b1d22 960px,#2a1c21 1090px,#231d22 1170px,#1d1e25 1240px,#1c1e24 1330px,#1e1f20 1410px,#1d1e1e 1920px)"></div>
<svg style="left:24px;top:1032px;" width="34" height="34" viewBox="0 0 34 34"><path d="M13 1.5Q11.5 9 18.5 13.5L15 20Q5 20 1 13Q9.5 11.5 13 1.5Z" fill="#e39f3a"/><path d="M7 31C-0.5 31 -1 21.5 5.5 20.5C5.5 13.5 14.5 10.5 18.5 15.5C22.5 13 28.5 16.5 27.8 21C33.5 21.5 33.5 31 26.5 31Z" fill="#d3e3f3"/><path d="M7 31C2.5 31 0.5 27.5 1.5 24.5C8 29 22 29 31 24.5C32 28 30 31 26.5 31Z" fill="#8fbce8"/></svg>
<div style="left:39.1px;top:1027.9px;width:19.4px;height:19.4px;background:#f38fa2;border-radius:50%"></div>
<span class="t" id="t48" style="left:44.6px;top:1039.0px;font-size:13px;color:#1a1a1a;">2</span>
<span class="t" id="t49" style="left:65px;top:1040.0px;font-size:14.5px;color:#ffffff;letter-spacing:-0.635px;">23°C</span>
<span class="t" dir="rtl" lang="ar" style="left:65px;top:1059.5px;font-size:14.2px;color:#cfcfcf;">غائم غالبًا</span>
<svg style="left:558px;top:1036px;" width="30" height="30" viewBox="0 0 30 30"><defs><linearGradient id="wg" x1="0" y1="0" x2="1" y2="1"><stop offset="0" stop-color="#6fd1ff"/><stop offset="1" stop-color="#1a8fe8"/></linearGradient></defs><rect x="0" y="0" width="14" height="14" rx="1" fill="url(#wg)"/><rect x="15.5" y="0" width="14" height="14" rx="1" fill="url(#wg)"/><rect x="0" y="15.5" width="14" height="14" rx="1" fill="url(#wg)"/><rect x="15.5" y="15.5" width="14" height="14" rx="1" fill="url(#wg)"/></svg>
<div style="left:603.5px;top:1030px;width:274.5px;height:40px;background:#4a373d;border-radius:20px;border:1px solid #5a474d"></div>
<svg style="left:617px;top:1040px;" width="20" height="20" viewBox="0 0 20 20"><circle cx="8.5" cy="8.5" r="6.6" fill="none" stroke="#f2f2f2" stroke-width="2"/><path d="M13.5 13.5L18.2 18.2" stroke="#f2f2f2" stroke-width="2.2" stroke-linecap="round"/></svg>
<span class="t" id="t50" style="left:649px;top:1050.5px;font-size:17px;color:#f0f0f0;letter-spacing:-0.575px;">Search</span>
<div style="left:895px;top:1045px;width:21px;height:19px;background:#6f6f6f;border-radius:2px"></div>
<div style="left:903px;top:1036px;width:22px;height:20px;background:#e9e9e9;border-radius:2px"></div>
<svg style="left:948px;top:1035px;" width="32" height="32" viewBox="0 0 32 32"><circle cx="16" cy="16" r="15" fill="#e33b2e"/><path d="M16 16L3 8.5A15 15 0 0 0 11 30.2Z" fill="#2da94f"/><path d="M16 16L11 30.2A15 15 0 0 0 29 8.5Z" fill="#f8bd13"/><path d="M16 16H29.5A15 15 0 0 0 3 8.5Z" fill="#e33b2e"/><circle cx="16" cy="16" r="6.8" fill="#f4f4f4"/><circle cx="16" cy="16" r="5.3" fill="#3b7ded"/><circle cx="25" cy="7" r="6.5" fill="#555"/><circle cx="25" cy="5.5" r="2.6" fill="#ddd"/></svg>
<svg style="left:1003px;top:1035px;" width="32" height="32" viewBox="0 0 32 32"><defs><linearGradient id="cg" x1="0" y1="0" x2="1" y2="1"><stop offset="0" stop-color="#2a8df0"/><stop offset=".45" stop-color="#4fc08d"/><stop offset=".7" stop-color="#f2b640"/><stop offset="1" stop-color="#e65aa8"/></linearGradient></defs><path d="M9 4H19Q22 4 23 7L25.5 14H29Q31 14 30.5 17L28 25Q27 28 23 28H13Q10 28 9 25L6.5 18H3Q1 18 1.5 15L4 7Q5 4 9 4Z" fill="url(#cg)"/><path d="M12.5 11H19L21.5 21H15Z" fill="#241a1e"/></svg>
<svg style="left:1058px;top:1036px;" width="32" height="30" viewBox="0 0 32 30"><path d="M1 4Q1 2 3 2H11L14 5H28Q30 5 30 7V10H1Z" fill="#e9a93a"/><rect x="1" y="7.5" width="30" height="21" rx="2" fill="#f7c95a"/><path d="M1 22H31V26.5Q31 28.5 29 28.5H3Q1 28.5 1 26.5Z" fill="#e7a93c"/><rect x="8" y="19.5" width="16" height="9" rx="1.5" fill="#1f6fd0"/><rect x="11" y="23" width="10" height="2.2" rx="1" fill="#9fd0ff"/></svg>
<div style="left:1324px;top:1026px;width:49px;height:49px;background:#2c2d31;border-radius:5px;border:1px solid #35363a"></div>
<svg style="left:1114px;top:1039px;" width="31" height="22" viewBox="0 0 31 22"><rect x="0" y="0" width="31" height="22" fill="#f3f3f3"/><rect x="0" y="0" width="31" height="2.2" fill="#cfcfcf"/><rect x="9" y="4" width="12" height="15" rx="1" fill="#1568cf"/><path d="M3 6H8M3 9H8M3 12H8M3 15H8M3 18H8M24 6H28.5M24 9H28.5M24 12H28.5M24 15H28.5" stroke="#9a9a9a" stroke-width="1.2"/></svg>
<svg style="left:1169px;top:1039px;" width="31" height="22" viewBox="0 0 31 22"><rect x="0" y="0" width="31" height="22" fill="#f3f3f3"/><rect x="0" y="0" width="31" height="2.2" fill="#cfcfcf"/><rect x="9" y="4" width="12" height="15" rx="1" fill="#1568cf"/><path d="M3 6H8M3 9H8M3 12H8M3 15H8M3 18H8M24 6H28.5M24 9H28.5M24 12H28.5M24 15H28.5" stroke="#9a9a9a" stroke-width="1.2"/></svg>
<svg style="left:1279px;top:1039px;" width="31" height="22" viewBox="0 0 31 22"><rect x="0" y="0" width="31" height="22" fill="#f3f3f3"/><rect x="0" y="0" width="31" height="2.2" fill="#cfcfcf"/><rect x="9" y="4" width="12" height="15" rx="1" fill="#1568cf"/><path d="M3 6H8M3 9H8M3 12H8M3 15H8M3 18H8M24 6H28.5M24 9H28.5M24 12H28.5M24 15H28.5" stroke="#9a9a9a" stroke-width="1.2"/></svg>
<svg style="left:1334px;top:1039px;" width="31" height="22" viewBox="0 0 31 22"><rect x="0" y="0" width="31" height="22" fill="#f3f3f3"/><rect x="0" y="0" width="31" height="2.2" fill="#cfcfcf"/><rect x="9" y="4" width="12" height="15" rx="1" fill="#1568cf"/><path d="M3 6H8M3 9H8M3 12H8M3 15H8M3 18H8M24 6H28.5M24 9H28.5M24 12H28.5M24 15H28.5" stroke="#9a9a9a" stroke-width="1.2"/></svg>
<svg style="left:1223px;top:1036px;" width="32" height="32" viewBox="0 0 32 32"><path d="M15 3A12.5 12.5 0 1 1 8.5 26.3L2 28L3.8 21.7A12.5 12.5 0 0 1 15 3Z" fill="#25c95a"/><path d="M15 5.6A9.9 9.9 0 1 1 9.5 23.8L5.2 25L6.4 20.9A9.9 9.9 0 0 1 15 5.6Z" fill="#221b1e"/><path d="M10.5 10.5Q11.5 9 12.5 10.5L13.6 12.6Q13.8 13.4 12.8 14.2Q14 17 17 18.3Q18 17 18.8 17.3L21 18.5Q22 19.2 20.8 20.8Q19 22.5 15.5 20.8Q11.5 18.6 10 14.5Q9.3 12 10.5 10.5Z" fill="#25c95a"/></svg>
<div style="left:1237.4px;top:1026.2px;width:25.6px;height:25.6px;background:#b2b7b2;border-radius:50%"></div>
<span class="t" id="t51" style="left:1242.5px;top:1038.8px;font-size:14.5px;color:#111;letter-spacing:-1.141px;">62</span>
<div style="left:959.5px;top:1070.5px;width:9px;height:3px;background:#8a8a8a;border-radius:1.5px"></div>
<div style="left:1070.0px;top:1070.5px;width:8px;height:3px;background:#8a8a8a;border-radius:1.5px"></div>
<div style="left:1180.0px;top:1070.5px;width:8px;height:3px;background:#8a8a8a;border-radius:1.5px"></div>
<div style="left:1235.0px;top:1070.5px;width:8px;height:3px;background:#8a8a8a;border-radius:1.5px"></div>
<div style="left:1290.0px;top:1070.5px;width:8px;height:3px;background:#8a8a8a;border-radius:1.5px"></div>
<div style="left:1339.0px;top:1070.5px;width:19px;height:3px;background:#9a9a9a;border-radius:1.5px"></div>
<svg style="left:1593px;top:1044px;" width="17" height="11" viewBox="0 0 17 11"><path d="M1.5 9.5L8.5 2L15.5 9.5" fill="none" stroke="#f0f0f0" stroke-width="1.7"/></svg>
<svg style="left:1630px;top:1042px;" width="22" height="15" viewBox="0 0 22 15"><path d="M5 14C0.5 14 0 8.5 4 7.8C5 3 11 2 13 6C17.5 4.5 19 9 18 10C22 10 22 14 18.5 14Z" fill="#e6e6e6"/><path d="M5.5 6C7.5 1.5 13.5 1.8 14.5 6" fill="none" stroke="#9a9a9a" stroke-width="1.4"/></svg>
<span class="t" id="t52" style="left:1674.5px;top:1050.0px;font-size:14px;color:#f4f4f4;letter-spacing:-0.922px;">ENG</span>
<svg style="left:1725px;top:1041px;" width="22" height="17" viewBox="0 0 22 17"><path d="M1.5 6.5C7 0.8 15 0.8 20.5 6.5" fill="none" stroke="#f0f0f0" stroke-width="1.6" stroke-linecap="round"/><path d="M4.8 9.8C8.5 6 13.5 6 17.2 9.8" fill="none" stroke="#f0f0f0" stroke-width="1.6" stroke-linecap="round"/><path d="M8 13C9.8 11.2 12.2 11.2 14 13" fill="none" stroke="#f0f0f0" stroke-width="1.6" stroke-linecap="round"/><circle cx="11" cy="15.3" r="1.3" fill="#f0f0f0"/></svg>
<svg style="left:1755px;top:1041px;" width="22" height="18" viewBox="0 0 22 18"><path d="M1.5 6.5H5L9.5 2.5V15.5L5 11.5H1.5Z" fill="none" stroke="#f0f0f0" stroke-width="1.4" stroke-linejoin="round"/><path d="M12.3 6.2Q14.3 9 12.3 11.8M15 4Q18.5 9 15 14M17.8 2Q22.5 9 17.8 16" fill="none" stroke="#f0f0f0" stroke-width="1.4" stroke-linecap="round"/></svg>
<svg style="left:1785px;top:1041px;" width="22" height="18" viewBox="0 0 22 18"><rect x="1.5" y="5" width="16.5" height="10" rx="2.5" fill="none" stroke="#f0f0f0" stroke-width="1.4"/><path d="M19.8 8V12" stroke="#f0f0f0" stroke-width="1.8" stroke-linecap="round"/><rect x="3.5" y="7" width="12.5" height="6" rx="1" fill="#f0f0f0"/><path d="M3.5 0.5L1 5.5H4L2.5 9.5" fill="none" stroke="#f0f0f0" stroke-width="1.3"/></svg>
<span class="t" id="t53" style="left:1841px;top:1040.0px;font-size:14.5px;color:#f4f4f4;letter-spacing:0.216px;">1:13 AM</span>
<span class="t" id="t54" style="left:1827px;top:1060.0px;font-size:14.5px;color:#f4f4f4;letter-spacing:0.498px;">9/25/2025</span>
<div style="left:531px;top:84px;width:858px;height:844px;background:#f0f0f0;border:1px solid #5f7b5f;border-radius:8px;box-shadow:0 4px 18px rgba(0,0,0,.38),0 0 6px rgba(0,0,0,.25);overflow:hidden"><div style="left:0;top:0;width:100%;height:37px;background:#647d64"></div></div>
<svg style="left:541px;top:92px;" width="20" height="22" viewBox="0 0 20 22"><path d="M2 4V16.5C2 19.5 13 19.5 13 16.5V4" fill="#eec063"/><path d="M2 4V16.5C2 17.5 4 18.6 6 18.7V5Z" fill="#f7dc9a"/><ellipse cx="7.5" cy="4" rx="5.5" ry="2.4" fill="#f6d88c" stroke="#d9a441" stroke-width="0.8"/><path d="M19 17H12.5M14.8 14L11.8 17L14.8 20" fill="none" stroke="#4a86d8" stroke-width="2.2"/></svg>
<span class="t" id="t55" style="left:568px;top:103.3px;font-size:16px;color:#ffffff;letter-spacing:-0.726px;">OLE DB Destination Editor</span>
<div style="left:1239px;top:102.3px;width:11.5px;height:1px;background:#8ba08b"></div>
<svg style="left:1292.5px;top:96.5px;" width="13" height="13" viewBox="0 0 13 13"><rect x="0.8" y="0.8" width="11.4" height="11.4" rx="1.6" fill="none" stroke="#ffffff" stroke-width="1.4"/></svg>
<svg style="left:1351.5px;top:96.5px;" width="13" height="13" viewBox="0 0 13 13"><path d="M0.7 0.7L12.3 12.3M12.3 0.7L0.7 12.3" stroke="#ffffff" stroke-width="1.3"/></svg>
<span class="t" id="t56" style="left:557px;top:151.7px;font-size:15px;color:#1b1b1b;letter-spacing:-0.032px;">Configure the properties used to insert data into a relational database using an OLE DB provider.</span>
<div style="left:553px;top:226px;width:145px;height:619px;background:#fff;border:1px solid #828790;overflow:hidden"><div style="left:0;bottom:0;width:100%;height:21px;background:#f0f0f0"></div><div style="left:22px;bottom:9.5px;width:97px;height:2.5px;background:#8c8c8c;border-radius:1.5px"></div></div>
<div style="left:558px;top:252px;width:70px;height:24px;background:#0078d7;outline:1px dotted #222;outline-offset:-1px"></div>
<div style="left:554px;top:227px;width:143px;height:30px;overflow:hidden">
<span class="t" id="t57" style="left:6px;top:13.1px;font-size:15px;color:#1b1b1b;letter-spacing:-0.004px;">Connection Manager</span>
</div>
<span class="t" id="t58" style="left:560.5px;top:264.2px;font-size:15px;color:#ffffff;letter-spacing:0.065px;">Mappings</span>
<span class="t" id="t59" style="left:560.5px;top:288.5px;font-size:15px;color:#1b1b1b;letter-spacing:-0.121px;">Error Output</span>
<div style="left:713px;top:226px;width:655.5px;height:304.4px;background:#f0f0f0;border-top:2px solid #747474;border-left:2px solid #747474;border-right:1px solid #fff;border-bottom:1px solid #fff"></div>
<div style="left:806px;top:238px;width:146px;height:284.5px;background:linear-gradient(#b7c7da 0px,#c9d7e8 14px,#dbe5f2 36px,#d5e1f0 100%);border:1px solid #5e6168;box-shadow:inset 0 0 0 1px #dfe8f3"></div>
<span class="t" id="t60" style="left:815.5px;top:261.7px;font-size:15px;color:#9a9ca2;letter-spacing:-0.218px;">Available Input C...</span>
<div style="left:815px;top:276px;width:128px;height:238px;background:#f0f0f0;border:1px solid #a3a6ab"></div>
<div style="left:816px;top:277px;width:105.39999999999998px;height:216px;background:#fff"></div>
<span class="t" id="t61" style="left:822.5px;top:286.6px;font-size:14px;color:#1b1b1b;letter-spacing:-0.286px;">Name</span>
<span class="t" id="t62" style="left:824.3px;top:309.0px;font-size:14px;color:#1b1b1b;letter-spacing:-0.357px;">customer_id</span>
<div style="left:816px;top:320.5px;width:105.39999999999998px;height:21.5px;background:#ffffe1"></div>
<span class="t" id="t63" style="left:824.3px;top:331.0px;font-size:14px;color:#1b1b1b;letter-spacing:-0.573px;">first_name</span>
<div style="left:816px;top:342px;width:105.39999999999998px;height:1px;background:#efefef"></div>
<span class="t" id="t64" style="left:824.3px;top:353.0px;font-size:14px;color:#1b1b1b;letter-spacing:-0.487px;">last_name</span>
<div style="left:816px;top:364.5px;width:105.39999999999998px;height:21.5px;background:#ffffe1"></div>
<span class="t" id="t65" style="left:824.3px;top:375.0px;font-size:14px;color:#1b1b1b;letter-spacing:-0.250px;">address_status</span>
<div style="left:816px;top:386px;width:105.39999999999998px;height:1px;background:#efefef"></div>
<span class="t" id="t66" style="left:824.3px;top:397.0px;font-size:14px;color:#1b1b1b;letter-spacing:-0.413px;">street_name</span>
<div style="left:816px;top:408.5px;width:105.39999999999998px;height:21.5px;background:#ffffe1"></div>
<span class="t" id="t67" style="left:824.3px;top:419.0px;font-size:14px;color:#1b1b1b;letter-spacing:-0.423px;">street_number</span>
<div style="left:816px;top:430px;width:105.39999999999998px;height:1px;background:#efefef"></div>
<span class="t" id="t68" style="left:824.3px;top:441.0px;font-size:14px;color:#1b1b1b;letter-spacing:-0.433px;">city</span>
<div style="left:816px;top:452.5px;width:105.39999999999998px;height:21.5px;background:#ffffe1"></div>
<span class="t" id="t69" style="left:824.3px;top:463.0px;font-size:14px;color:#1b1b1b;letter-spacing:-0.456px;">country_name</span>
<div style="left:816px;top:474px;width:105.39999999999998px;height:1px;background:#efefef"></div>
<span class="t" id="t70" style="left:824.3px;top:485.0px;font-size:14px;color:#1b1b1b;letter-spacing:-0.067px;">email</span>
<div style="left:816px;top:298px;width:105.39999999999998px;height:23px;border-top:1px dotted #222;border-bottom:1px dotted #222;border-left:1px dotted #222"></div>
<div style="left:930.0px;top:298px;width:3px;height:138px;background:#8a8a8a;border-radius:1.5px"></div>
<div style="left:837px;top:501px;width:61px;height:3px;background:#8a8a8a;border-radius:1.5px"></div>
<svg style="left:929px;top:500px;" width="10" height="10" viewBox="0 0 10 10"><rect x="8" y="0" width="2.6" height="2.6" fill="#b4b4b4"/><rect x="4" y="4" width="2.6" height="2.6" fill="#b4b4b4"/><rect x="8" y="4" width="2.6" height="2.6" fill="#b4b4b4"/><rect x="0" y="8" width="2.6" height="2.6" fill="#b4b4b4"/><rect x="4" y="8" width="2.6" height="2.6" fill="#b4b4b4"/><rect x="8" y="8" width="2.6" height="2.6" fill="#b4b4b4"/></svg>
<div style="left:1140px;top:238px;width:135px;height:284.5px;background:linear-gradient(#b7c7da 0px,#c9d7e8 14px,#dbe5f2 36px,#d5e1f0 100%);border:1px solid #5e6168;box-shadow:inset 0 0 0 1px #dfe8f3"></div>
<span class="t" id="t71" style="left:1149.5px;top:261.7px;font-size:15px;color:#9a9ca2;letter-spacing:-0.183px;">Available Destin...</span>
<div style="left:1149px;top:276px;width:117px;height:238px;background:#f0f0f0;border:1px solid #a3a6ab"></div>
<div style="left:1150px;top:277px;width:94.59999999999991px;height:216px;background:#fff"></div>
<span class="t" id="t72" style="left:1156.5px;top:286.6px;font-size:14px;color:#1b1b1b;letter-spacing:-0.286px;">Name</span>
<span class="t" id="t73" style="left:1158.3px;top:309.0px;font-size:14px;color:#1b1b1b;letter-spacing:-0.676px;">Customer_SK</span>
<div style="left:1150px;top:320.5px;width:94.59999999999991px;height:21.5px;background:#ffffe1"></div>
<span class="t" id="t74" style="left:1158.3px;top:331.0px;font-size:14px;color:#1b1b1b;letter-spacing:-0.517px;">Customer_id</span>
<div style="left:1150px;top:342px;width:94.59999999999991px;height:1px;background:#efefef"></div>
<span class="t" id="t75" style="left:1158.3px;top:353.0px;font-size:14px;color:#1b1b1b;letter-spacing:-0.518px;">First_Name</span>
<div style="left:1150px;top:364.5px;width:94.59999999999991px;height:21.5px;background:#ffffe1"></div>
<span class="t" id="t76" style="left:1158.3px;top:375.0px;font-size:14px;color:#1b1b1b;letter-spacing:-0.487px;">Last_Name</span>
<div style="left:1150px;top:386px;width:94.59999999999991px;height:1px;background:#efefef"></div>
<span class="t" id="t77" style="left:1158.3px;top:397.0px;font-size:14px;color:#1b1b1b;letter-spacing:-0.267px;">email</span>
<div style="left:1150px;top:408.5px;width:94.59999999999991px;height:21.5px;background:#ffffe1"></div>
<span class="t" id="t78" style="left:1158.3px;top:419.0px;font-size:14px;color:#1b1b1b;letter-spacing:-0.132px;">Address_St..</span>
<div style="left:1150px;top:430px;width:94.59999999999991px;height:1px;background:#efefef"></div>
<span class="t" id="t79" style="left:1158.3px;top:441.0px;font-size:14px;color:#1b1b1b;letter-spacing:-0.638px;">street_numb...</span>
<div style="left:1150px;top:452.5px;width:94.59999999999991px;height:21.5px;background:#ffffe1"></div>
<span class="t" id="t80" style="left:1158.3px;top:463.0px;font-size:14px;color:#1b1b1b;letter-spacing:-0.413px;">street_name</span>
<div style="left:1150px;top:474px;width:94.59999999999991px;height:1px;background:#efefef"></div>
<span class="t" id="t81" style="left:1158.3px;top:485.0px;font-size:14px;color:#1b1b1b;letter-spacing:-0.433px;">city</span>
<div style="left:1150px;top:298px;width:94.59999999999991px;height:23px;border-top:1px dotted #222;border-bottom:1px dotted #222;border-left:1px dotted #222"></div>
<div style="left:1253.1999999999998px;top:298px;width:3px;height:114.5px;background:#8a8a8a;border-radius:1.5px"></div>
<div style="left:1171px;top:501px;width:50px;height:3px;background:#8a8a8a;border-radius:1.5px"></div>
<svg style="left:1252px;top:500px;" width="10" height="10" viewBox="0 0 10 10"><rect x="8" y="0" width="2.6" height="2.6" fill="#b4b4b4"/><rect x="4" y="4" width="2.6" height="2.6" fill="#b4b4b4"/><rect x="8" y="4" width="2.6" height="2.6" fill="#b4b4b4"/><rect x="0" y="8" width="2.6" height="2.6" fill="#b4b4b4"/><rect x="4" y="8" width="2.6" height="2.6" fill="#b4b4b4"/><rect x="8" y="8" width="2.6" height="2.6" fill="#b4b4b4"/></svg>
<svg style="left:0px;top:0px;" width="1920" height="1080" viewBox="0 0 1920 1080"><path d="M952.5 309.3L1140 331.5" stroke="#000" stroke-width="1"/><rect x="952" y="308.1" width="2.4" height="2.4" fill="#000"/><rect x="1137.8" y="330.3" width="2.4" height="2.4" fill="#000"/><path d="M952.5 331.5L1140 353.5" stroke="#000" stroke-width="1"/><rect x="952" y="330.3" width="2.4" height="2.4" fill="#000"/><rect x="1137.8" y="352.3" width="2.4" height="2.4" fill="#000"/><path d="M952.5 353.5L1140 375.5" stroke="#000" stroke-width="1"/><rect x="952" y="352.3" width="2.4" height="2.4" fill="#000"/><rect x="1137.8" y="374.3" width="2.4" height="2.4" fill="#000"/><path d="M952.5 375.5L1140 419.6" stroke="#000" stroke-width="1"/><rect x="952" y="374.3" width="2.4" height="2.4" fill="#000"/><rect x="1137.8" y="418.40000000000003" width="2.4" height="2.4" fill="#000"/><path d="M952.5 397.5L1140 463.6" stroke="#000" stroke-width="1"/><rect x="952" y="396.3" width="2.4" height="2.4" fill="#000"/><rect x="1137.8" y="462.40000000000003" width="2.4" height="2.4" fill="#000"/><path d="M952.5 419.6L1140 441.6" stroke="#000" stroke-width="1"/><rect x="952" y="418.40000000000003" width="2.4" height="2.4" fill="#000"/><rect x="1137.8" y="440.40000000000003" width="2.4" height="2.4" fill="#000"/><path d="M952.5 441.6L1140 485.5" stroke="#000" stroke-width="1"/><rect x="952" y="440.40000000000003" width="2.4" height="2.4" fill="#000"/><rect x="1137.8" y="484.3" width="2.4" height="2.4" fill="#000"/><path d="M952.5 463.6L1140 507.5" stroke="#000" stroke-width="1"/><rect x="952" y="462.40000000000003" width="2.4" height="2.4" fill="#000"/><rect x="1137.8" y="506.3" width="2.4" height="2.4" fill="#000"/><path d="M952.5 485.5L1140 397.5" stroke="#000" stroke-width="1"/><rect x="952" y="484.3" width="2.4" height="2.4" fill="#000"/><rect x="1137.8" y="396.3" width="2.4" height="2.4" fill="#000"/><path d="M952.5 507.5L1140 514.5" stroke="#000" stroke-width="1"/><rect x="952" y="506.3" width="2.4" height="2.4" fill="#000"/><rect x="1137.8" y="513.3" width="2.4" height="2.4" fill="#000"/></svg>
<div style="left:712.8px;top:536px;width:655.7px;height:309px;background:#fff;border:1px solid #b4b4b4"></div>
<div style="left:1348px;top:537px;width:19.5px;height:307px;background:#f0f0f0"></div>
<div style="left:1356px;top:602.5px;width:3px;height:220px;background:#8a8a8a;border-radius:1.5px"></div>
<span class="t" id="t82" style="left:721.2px;top:550.7px;font-size:15px;color:#1b1b1b;letter-spacing:-0.084px;">Input Column</span>
<span class="t" id="t83" style="left:1021.7px;top:550.7px;font-size:15px;color:#1b1b1b;letter-spacing:-0.053px;">Destination Column</span>
<div style="left:714.5px;top:563px;width:600px;height:1px;background:#e6e6e6"></div>
<div style="left:1314.5px;top:537px;width:1px;height:26px;background:#e6e6e6"></div>
<div style="left:713.8px;top:590.0px;width:600.5px;height:1px;background:#ececec"></div>
<span class="t" id="t84" style="left:723.2px;top:576.7px;font-size:15px;color:#1b1b1b;letter-spacing:-0.303px;">first_name</span>
<span class="t" id="t85" style="left:1023.2px;top:576.7px;font-size:15px;color:#1b1b1b;letter-spacing:-0.557px;">First_Name</span>
<div style="left:713.8px;top:590.5px;width:600.5px;height:27px;background:#ffffe1"></div>
<div style="left:713.8px;top:617.0px;width:600.5px;height:1px;background:#ececec"></div>
<span class="t" id="t86" style="left:723.2px;top:603.7px;font-size:15px;color:#1b1b1b;letter-spacing:-0.490px;">last_name</span>
<span class="t" id="t87" style="left:1023.2px;top:603.7px;font-size:15px;color:#1b1b1b;letter-spacing:-0.615px;">Last_Name</span>
<div style="left:713.8px;top:644.0px;width:600.5px;height:1px;background:#ececec"></div>
<span class="t" id="t88" style="left:723.2px;top:630.7px;font-size:15px;color:#1b1b1b;letter-spacing:0.110px;">email</span>
<span class="t" id="t89" style="left:1023.2px;top:630.7px;font-size:15px;color:#1b1b1b;letter-spacing:0.110px;">email</span>
<div style="left:713.8px;top:644.5px;width:600.5px;height:27px;background:#ffffe1"></div>
<div style="left:713.8px;top:671.0px;width:600.5px;height:1px;background:#ececec"></div>
<span class="t" id="t90" style="left:723.2px;top:657.7px;font-size:15px;color:#1b1b1b;letter-spacing:-0.533px;">address_status</span>
<span class="t" id="t91" style="left:1023.2px;top:657.7px;font-size:15px;color:#1b1b1b;letter-spacing:-0.547px;">Address_Status</span>
<div style="left:713.8px;top:698.0px;width:600.5px;height:1px;background:#ececec"></div>
<span class="t" id="t92" style="left:723.2px;top:684.7px;font-size:15px;color:#1b1b1b;letter-spacing:-0.243px;">street_number</span>
<span class="t" id="t93" style="left:1023.2px;top:684.7px;font-size:15px;color:#1b1b1b;letter-spacing:-0.243px;">street_number</span>
<div style="left:713.8px;top:698.5px;width:600.5px;height:27px;background:#ffffe1"></div>
<div style="left:713.8px;top:725.0px;width:600.5px;height:1px;background:#ececec"></div>
<span class="t" id="t94" style="left:723.2px;top:711.7px;font-size:15px;color:#1b1b1b;letter-spacing:-0.359px;">street_name</span>
<span class="t" id="t95" style="left:1023.2px;top:711.7px;font-size:15px;color:#1b1b1b;letter-spacing:-0.359px;">street_name</span>
<div style="left:713.8px;top:752.0px;width:600.5px;height:1px;background:#ececec"></div>
<span class="t" id="t96" style="left:723.2px;top:738.7px;font-size:15px;color:#1b1b1b;letter-spacing:0.100px;">city</span>
<span class="t" id="t97" style="left:1023.2px;top:738.7px;font-size:15px;color:#1b1b1b;letter-spacing:0.100px;">city</span>
<div style="left:713.8px;top:752.5px;width:600.5px;height:27px;background:#ffffe1"></div>
<div style="left:713.8px;top:779.0px;width:600.5px;height:1px;background:#ececec"></div>
<span class="t" id="t98" style="left:723.2px;top:765.7px;font-size:15px;color:#1b1b1b;letter-spacing:-0.297px;">country_name</span>
<span class="t" id="t99" style="left:1023.2px;top:765.7px;font-size:15px;color:#1b1b1b;letter-spacing:-0.297px;">country_name</span>
<div style="left:713.8px;top:806.0px;width:600.5px;height:1px;background:#ececec"></div>
<span class="t" id="t100" style="left:723.2px;top:792.7px;font-size:15px;color:#1b1b1b;letter-spacing:0.011px;">valid_from</span>
<span class="t" id="t101" style="left:1023.2px;top:792.7px;font-size:15px;color:#1b1b1b;letter-spacing:0.011px;">valid_from</span>
<div style="left:713.8px;top:806.5px;width:600.5px;height:27px;background:#ffffe1"></div>
<div style="left:713.8px;top:833.0px;width:600.5px;height:1px;background:#ececec"></div>
<span class="t" id="t102" style="left:723.2px;top:819.7px;font-size:15px;color:#1b1b1b;letter-spacing:0.369px;">&lt;ignore&gt;</span>
<span class="t" id="t103" style="left:1023.2px;top:819.7px;font-size:15px;color:#1b1b1b;letter-spacing:-0.072px;">valid_to</span>
<div style="left:1014px;top:537px;width:1px;height:297px;background:#e3e3e3"></div>
<div style="left:1313.8px;top:563px;width:1px;height:271px;background:#ececec"></div>
<div style="left:548px;top:857px;width:826px;height:1px;background:#a0a0a0"></div>
<div style="left:548px;top:858px;width:826px;height:1px;background:#fff"></div>
<div style="left:1044px;top:877px;width:98px;height:32.5px;background:#fdfdfd;border:1.6px solid #0067c0;border-radius:4.5px"></div>
<div style="left:1160.3px;top:877px;width:97.7px;height:32.5px;background:#fdfdfd;border:1px solid #d2d2d2;border-bottom-color:#bdbdbd;border-radius:4.5px"></div>
<div style="left:1276px;top:877px;width:97.8px;height:32.5px;background:#fdfdfd;border:1px solid #d2d2d2;border-bottom-color:#bdbdbd;border-radius:4.5px"></div>
<span class="t" id="t104" style="left:1083px;top:893.4px;font-size:15px;color:#1b1b1b;letter-spacing:-1.500px;">OK</span>
<span class="t" id="t105" style="left:1187px;top:893.4px;font-size:15px;color:#1b1b1b;letter-spacing:-0.661px;">Cancel</span>
<span class="t" id="t106" style="left:1309.5px;top:893.4px;font-size:15px;color:#1b1b1b;letter-spacing:0.014px;">Help</span>
<svg style="left:840px;top:940px;" width="245" height="90" viewBox="0 0 245 90"><g opacity=".33"><text x="120" y="68" text-anchor="middle" direction="rtl" lang="ar" font-family="DejaVu Sans,Liberation Sans,sans-serif" font-weight="bold" font-size="70" fill="#ffffff" stroke="#ffffff" stroke-width="5" stroke-linejoin="round" stroke-linecap="round" textLength="228" lengthAdjust="spacingAndGlyphs">مستقل</text></g></svg>
<span class="t" id="t107" style="left:846px;top:1038.0px;font-size:38px;color:#ffffff;letter-spacing:-0.539px;font-weight:bold;opacity:.33;">mostaql.com</span>
</body></html>
